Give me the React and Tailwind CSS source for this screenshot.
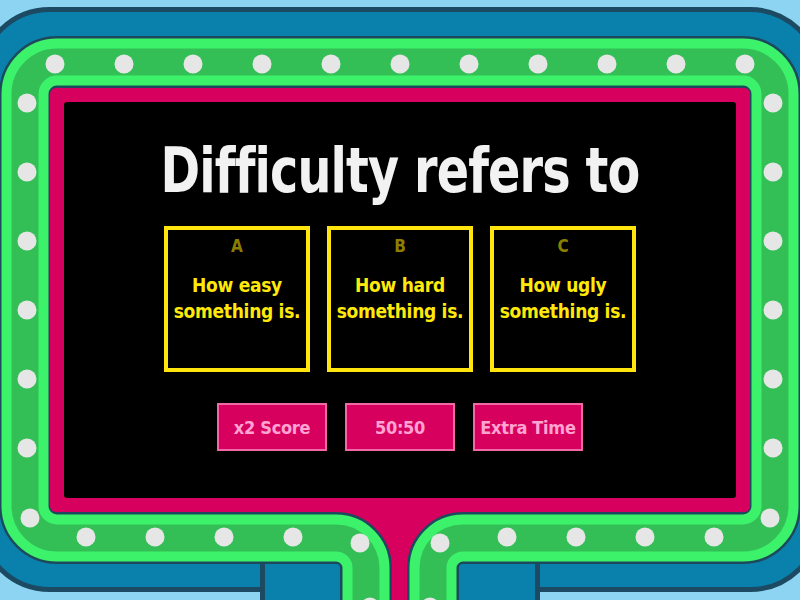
import React from 'react'

const TOP_DOTS = [55, 124, 193, 262, 331, 400, 469, 538, 607, 676, 745]
const SIDE_DOTS = [103, 172, 241, 310, 379, 448]
const BOTTOM_DOTS = [
  [30, 518], [86, 537], [155, 537], [224, 537], [293, 537], [360, 543], [370, 607],
  [770, 518], [714, 537], [645, 537], [576, 537], [507, 537], [440, 543], [430, 607],
]

const RING =
  'M 366 640 L 366 568 A 30 30 0 0 0 336 538 L 57 538 A 32 32 0 0 1 25 506 L 25 94 A 32 32 0 0 1 57 62 L 743 62 A 32 32 0 0 1 775 94 L 775 506 A 32 32 0 0 1 743 538 L 463 538 A 30 30 0 0 0 433 568 L 433 640'

function Frame() {
  return (
    <svg className="absolute inset-0" width="800" height="600" viewBox="0 0 800 600">
      <rect x="-20" y="9.5" width="840" height="580" rx="70" fill="#0a80ad" stroke="#1c4a63" strokeWidth="5" />
      <rect x="262.5" y="560" width="275" height="60" fill="#0a80ad" stroke="#1c4a63" strokeWidth="5" />
      <rect x="265" y="565" width="270" height="40" fill="#0a80ad" />
      <rect x="44" y="82" width="712" height="436" fill="#1c3442" />
      <rect x="330" y="505" width="140" height="50" fill="#d8005f" />
      <rect x="380" y="505" width="40" height="100" fill="#d8005f" />
      <path d={RING} fill="none" stroke="#1c4a5c" strokeWidth="52" />
      <path d={RING} fill="none" stroke="#3df26b" strokeWidth="47" />
      <path d={RING} fill="none" stroke="#33bf55" strokeWidth="27" />
      {TOP_DOTS.map((x) => (
        <circle key={`t${x}`} cx={x} cy="64" r="9.5" fill="#e6e6e6" />
      ))}
      {SIDE_DOTS.map((y) => (
        <React.Fragment key={`s${y}`}>
          <circle cx="27" cy={y} r="9.5" fill="#e6e6e6" />
          <circle cx="773" cy={y} r="9.5" fill="#e6e6e6" />
        </React.Fragment>
      ))}
      {BOTTOM_DOTS.map(([x, y]) => (
        <circle key={`b${x}`} cx={x} cy={y} r="9.5" fill="#e6e6e6" />
      ))}
    </svg>
  )
}

const answers = [
  { letter: 'A', text: ['How easy', 'something is.'] },
  { letter: 'B', text: ['How hard', 'something is.'] },
  { letter: 'C', text: ['How ugly', 'something is.'] },
]

const powerUps = ['x2 Score', '50:50', 'Extra Time']

export default function App() {
  return (
    <div className="relative h-[600px] w-[800px] overflow-hidden bg-[#8dd4f2] font-['DejaVu_Sans_Condensed','DejaVu_Sans',sans-serif]">
      <Frame />
      <div className="relative flex h-full flex-col px-[50px] pt-[88px]">
        <div className="h-[424px] rounded-[6px] bg-[#d8005f] p-[14px]">
          <div className="flex h-full flex-col items-center rounded-[3px] bg-black">
            <h1 className="mt-[34px] scale-x-[0.855] text-[62px] font-bold leading-[70px] tracking-[-1px] text-[#f2f2f2]">
              Difficulty refers to
            </h1>
            <div className="mt-[20px] flex gap-[17px]">
              {answers.map((a) => (
                <div
                  key={a.letter}
                  className="flex h-[146px] w-[146px] flex-col items-center border-4 border-[#ffe50d] pt-[6px] text-center"
                >
                  <span className="text-[17px] font-bold leading-[20px] text-[#8c7f00]">{a.letter}</span>
                  <p className="mt-[16px] text-[19px] font-bold leading-[26px] tracking-[-0.3px] text-[#ffe90a]">
                    {a.text[0]}
                    <br />
                    {a.text[1]}
                  </p>
                </div>
              ))}
            </div>
            <div className="mt-[31px] flex gap-[18px]">
              {powerUps.map((p) => (
                <button
                  key={p}
                  className="h-[48px] w-[110px] border-2 border-[#f06aa6] bg-[#d8005f] text-[18px] font-bold tracking-[-0.3px] text-[#ffa3d2]"
                >
                  {p}
                </button>
              ))}
            </div>
          </div>
        </div>
      </div>
    </div>
  )
}
